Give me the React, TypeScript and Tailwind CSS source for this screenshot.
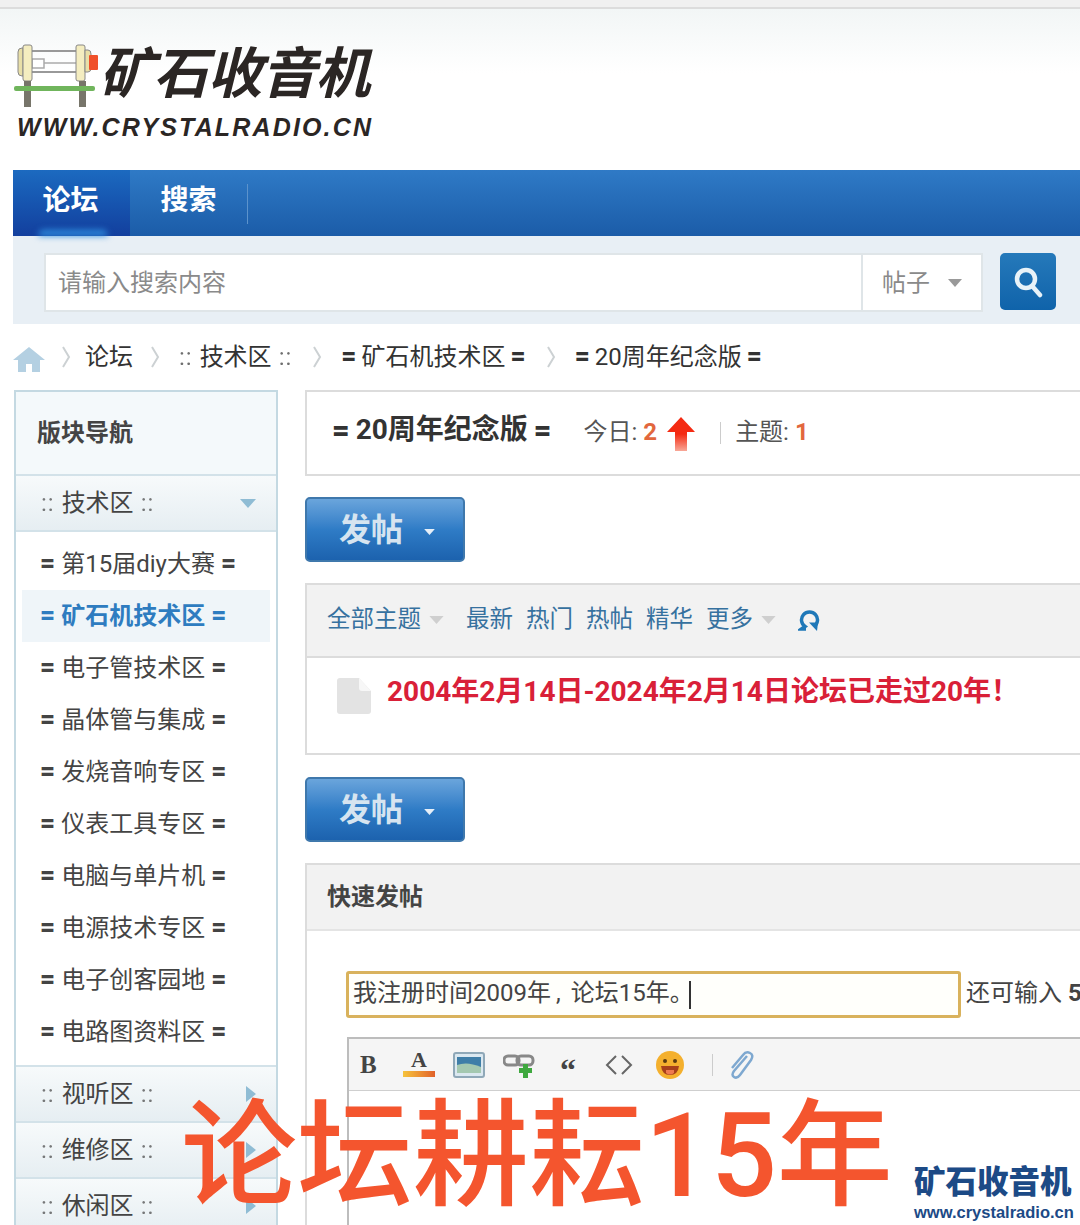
const boards = [
  '第15届diy大赛',
  '矿石机技术区',
  '电子管技术区',
  '晶体管与集成',
  '发烧音响专区',
  '仪表工具专区',
  '电脑与单片机',
  '电源技术专区',
  '电子创客园地',
  '电路图资料区',
]

function RadioLogo() {
  return (
    <svg width="84" height="66" viewBox="0 0 84 66" className="shrink-0">
      <path d="M18 7h52M18 28h52" stroke="#999" strokeWidth="2" fill="none" />
      <path d="M18 15h12v9H18zM30 19h40" stroke="#aaa" strokeWidth="1.5" fill="#fff" />
      <path d="M4 8q0-4 4-4h1v28H8q-4 0-4-4z" fill="#e8dfa8" stroke="#888" />
      <rect x="9" y="1" width="9" height="36" rx="2" fill="#f4edc0" stroke="#888" />
      <rect x="62" y="1" width="9" height="36" rx="2" fill="#f4edc0" stroke="#888" />
      <path d="M71 6h3q3 0 3 4v14q0 4-3 4h-3z" fill="#e8dfa8" stroke="#888" />
      <rect x="75" y="11" width="9" height="15" rx="1" fill="#f0502a" />
      <rect x="10" y="37" width="7" height="26" fill="#77756a" />
      <rect x="65" y="37" width="7" height="26" fill="#77756a" />
      <rect x="0" y="42" width="81" height="5" rx="2" fill="#70b55c" />
    </svg>
  )
}

function Caret({ color, size = 'w-[16px] h-[9px]' }: { color: string; size?: string }) {
  return (
    <svg viewBox="0 0 16 9" className={size}>
      <path d="M0 0h16L8 9z" fill={color} />
    </svg>
  )
}

function Chevron() {
  return (
    <svg width="10" height="22" viewBox="0 0 10 22" className="shrink-0">
      <path d="M2 1l6 10-6 10" stroke="#ccd1d3" strokeWidth="2" fill="none" />
    </svg>
  )
}

// board names are wrapped in heavy equals signs on the forum
function Eq({ children, gap = 'gap-[6px]' }: { children: React.ReactNode; gap?: string }) {
  return (
    <span className={`inline-flex items-center whitespace-nowrap ${gap}`}>
      <span className="font-black text-[1.08em] leading-none">=</span>
      <span>{children}</span>
      <span className="font-black text-[1.08em] leading-none">=</span>
    </span>
  )
}

function Dots({ children }: { children: React.ReactNode }) {
  return (
    <span className="inline-flex items-center whitespace-nowrap gap-[7px]">
      <span className="tracking-[1px] opacity-70">::</span>
      <span>{children}</span>
      <span className="tracking-[1px] opacity-70">::</span>
    </span>
  )
}

function PostButton() {
  return (
    <button className="w-[160px] h-[65px] rounded-[5px] border-2 border-[#3f78ac] bg-gradient-to-b from-[#6aa5dc] via-[#2f7cc6] to-[#1c62ae] flex items-center pl-[32px] text-[32px] font-bold text-[#d6e4f0]">
      发帖
      <Caret color="#e6eff8" size="w-[11px] h-[6px] ml-[21px] mt-1" />
    </button>
  )
}

function GroupRow({ label, open }: { label: string; open?: boolean }) {
  return (
    <div className="h-[56px] flex items-center justify-between pl-[25px] pr-[20px] border-b-2 border-[#d3e2e9] bg-gradient-to-b from-[#f7fafb] to-[#e6eef2] text-[24px] text-[#444]">
      <Dots>{label}</Dots>
      {open ? (
        <Caret color="#8fbcd4" />
      ) : (
        <svg width="10" height="16" viewBox="0 0 10 16">
          <path d="M0 0l10 8-10 8z" fill="#8fbcd4" />
        </svg>
      )}
    </div>
  )
}

function EditorIcons() {
  return (
    <div className="h-[52px] flex items-center pl-[11px] bg-[#f5f5f5] border-b border-[#cfcfcf]">
      <span className="w-[20px] text-[25px] leading-none font-black text-[#444] font-['Liberation_Serif',serif]">B</span>
      <span className="ml-[23px] w-[32px] flex flex-col items-center leading-none">
        <span className="text-[22px] font-bold text-[#444] font-['Liberation_Serif',serif] -mt-1">A</span>
        <span className="w-[32px] h-[6px] bg-gradient-to-r from-[#f5c33c] to-[#e0602a]" />
      </span>
      <svg width="32" height="26" viewBox="0 0 32 26" className="ml-[18px]">
        <rect x="1" y="1" width="30" height="24" rx="2" fill="#dbe8f0" stroke="#8fa8b8" strokeWidth="2" />
        <rect x="4" y="5" width="24" height="16" fill="#3f7ea8" />
        <path d="M4 13q10-4 24 2v6H4z" fill="#a4c8b0" />
      </svg>
      <svg width="34" height="28" viewBox="0 0 34 28" className="ml-[18px]">
        <rect x="1" y="5" width="15" height="9" rx="4" fill="none" stroke="#888" strokeWidth="3" />
        <rect x="14" y="5" width="16" height="9" rx="4" fill="none" stroke="#888" strokeWidth="3" />
        <path d="M20 13h5v4h4v5h-4v5h-5v-5h-4v-5h4z" fill="#3fa83f" />
      </svg>
      <span className="ml-[23px] w-[16px] text-[32px] leading-none font-black text-[#444] font-['Liberation_Serif',serif] mt-[10px] text-center">“</span>
      <svg width="28" height="22" viewBox="0 0 28 22" className="ml-[29px]">
        <path d="M11 2L2 11l9 9M17 2l9 9-9 9" stroke="#666" strokeWidth="2" fill="none" />
      </svg>
      <svg width="30" height="30" viewBox="0 0 30 30" className="ml-[22px]">
        <circle cx="15" cy="15" r="14" fill="#f4b02e" />
        <circle cx="10" cy="11" r="2" fill="#5a3a10" />
        <circle cx="20" cy="11" r="2" fill="#5a3a10" />
        <path d="M6 16h18q-1 9-9 9t-9-9z" fill="#a8401a" />
        <path d="M11 20h8v3q-4 3-8 0z" fill="#ee7a50" />
      </svg>
      <span className="ml-[27px] w-px h-[22px] bg-[#ccc]" />
      <svg width="28" height="30" viewBox="0 0 28 30" className="ml-[14px]">
        <path d="M20 6L7 21q-3 4 0 6t6-2L24 10q3-5-1-7t-7 2L5 18" stroke="#7ea8d0" strokeWidth="2.5" fill="none" />
      </svg>
    </div>
  )
}

export default function App() {
  return (
    <div className="relative w-[1080px] h-[1225px] overflow-hidden bg-white font-['Roboto','Noto_Sans_CJK_SC',sans-serif]">
      <div className="h-[9px] bg-[#f0f0f0] border-b-2 border-[#dcdcdc]" />

      {/* Logo */}
      <div className="h-[161px] pl-[14px] pt-[35px] bg-gradient-to-b from-[#f2f6f6] to-white to-40%">
        <div className="flex items-start">
          <RadioLogo />
          <span className="ml-[6px] mt-[-3px] text-[55px] leading-[66px] font-bold tracking-[-1px] text-[#2b2624] [transform:skewX(-14deg)] whitespace-nowrap">
            矿石收音机
          </span>
        </div>
        <div className="ml-[3px] mt-[3px] text-[25px] leading-[28px] font-black italic tracking-[2.15px] text-[#2b2624] font-['Liberation_Sans',sans-serif] whitespace-nowrap">
          WWW.CRYSTALRADIO.CN
        </div>
      </div>

      <div className="ml-[13px]">
        {/* Nav */}
        <div className="h-[66px] flex bg-gradient-to-b from-[#2f7ac6] to-[#1b5ca8] text-white text-[28px] font-bold">
          <div className="relative w-[117px] flex items-center justify-center bg-gradient-to-b from-[#1c6ac0] to-[#133f9e] pb-[4px] pr-[2px]">
            论坛
            <span className="absolute bottom-0 left-[25px] w-[70px] h-[6px] rounded-t-full bg-[#2f8fe0] blur-[3px]" />
          </div>
          <div className="w-[117px] flex items-center justify-center pb-[4px]">搜索</div>
          <div className="w-px h-[40px] mt-[14px] bg-[#5c93cc]" />
        </div>

        {/* Search */}
        <div className="h-[88px] flex items-start pt-[17px] pl-[31px] bg-[#e8eff5]">
          <div className="w-[939px] h-[59px] flex items-center bg-white border-2 border-[#dfe5e8] text-[24px] text-[#8a8a8a]">
            <div className="flex-1 pl-[12px]">请输入搜索内容</div>
            <div className="w-[120px] h-full flex items-center pl-[19px] gap-[18px] border-l-2 border-[#dfe5e8]">
              帖子
              <Caret color="#999" size="w-[14px] h-[8px]" />
            </div>
          </div>
          <div className="ml-[17px] w-[56px] h-[57px] rounded-[5px] bg-gradient-to-b from-[#2579ba] to-[#0f63aa] flex items-center justify-center">
            <svg width="30" height="32" viewBox="0 0 30 32">
              <circle cx="13" cy="13" r="9" stroke="#e8f2f8" strokeWidth="4.5" fill="none" />
              <path d="M20 21l7 8" stroke="#e8f2f8" strokeWidth="4.5" strokeLinecap="round" />
            </svg>
          </div>
        </div>

        {/* Breadcrumb */}
        <div className="h-[66px] flex items-center text-[24px] text-[#333] whitespace-nowrap">
          <svg width="32" height="26" viewBox="0 0 32 26" className="shrink-0 mt-[3px]">
            <path d="M16 1L0 14h5v12h8v-8h6v8h8V14h5z" fill="#b4d0e2" />
          </svg>
          <span className="ml-[16px]"><Chevron /></span>
          <span className="ml-[14px]">论坛</span>
          <span className="ml-[17px]"><Chevron /></span>
          <span className="ml-[19px]"><Dots>技术区</Dots></span>
          <span className="ml-[20px]"><Chevron /></span>
          <span className="ml-[19px]"><Eq gap="gap-[5px]">矿石机技术区</Eq></span>
          <span className="ml-[20px]"><Chevron /></span>
          <span className="ml-[19px]"><Eq gap="gap-[5px]">20周年纪念版</Eq></span>
        </div>

        <div className="flex items-start">
          {/* Sidebar */}
          <aside className="ml-px w-[264px] shrink-0 border-x-2 border-t-2 border-[#c4d9e2]">
            <div className="h-[84px] flex items-center pl-[21px] bg-[#f4f9fb] border-b-2 border-[#d3e2e9] text-[24px] font-bold text-[#444]">
              版块导航
            </div>
            <GroupRow label="技术区" open />
            <div className="pt-[6px] pb-[7px] px-[6px] border-b-2 border-[#d3e2e9]">
              {boards.map((b, i) => (
                <div
                  key={b}
                  className={
                    i === 1
                      ? 'h-[52px] flex items-center pl-[18px] bg-[#eff5f9] text-[24px] font-bold text-[#2e7cc0]'
                      : 'h-[52px] flex items-center pl-[18px] text-[24px] text-[#444]'
                  }
                >
                  <Eq>{b}</Eq>
                </div>
              ))}
            </div>
            <GroupRow label="视听区" />
            <GroupRow label="维修区" />
            <GroupRow label="休闲区" />
          </aside>

          {/* Main */}
          <main className="ml-[27px] w-[1000px] shrink-0">
            <div className="h-[86px] flex items-start pl-[25px] border-2 border-[#dcdcdc] whitespace-nowrap">
              <span className="mt-[18px] text-[28px] leading-[40px] font-bold text-[#333]">
                <Eq>20周年纪念版</Eq>
              </span>
              <span className="ml-[32px] mt-[22px] text-[24px] leading-[36px] text-[#555]">
                今日: <b className="text-[#e2673d]">2</b>
              </span>
              <svg width="28" height="34" viewBox="0 0 28 34" className="ml-[10px] mt-[25px]">
                <defs>
                  <linearGradient id="up" x1="0" y1="0" x2="0" y2="1">
                    <stop offset="0.5" stopColor="#f42a12" />
                    <stop offset="1" stopColor="#f8a898" />
                  </linearGradient>
                </defs>
                <path d="M14 0l14 15h-8v19H8V15H0z" fill="url(#up)" />
              </svg>
              <span className="ml-[25px] mt-[30px] w-px h-[22px] bg-[#ccc]" />
              <span className="ml-[14px] mt-[22px] text-[24px] leading-[36px] text-[#555]">
                主题: <b className="text-[#e2673d]">1</b>
              </span>
            </div>

            <div className="mt-[21px]"><PostButton /></div>

            <div className="mt-[21px] border-2 border-[#dcdcdc]">
              <div className="h-[73px] flex items-center pl-[20px] pb-[2px] bg-[#f2f2f2] border-b-2 border-[#dcdcdc] text-[23.5px] text-[#36719f] whitespace-nowrap">
                全部主题
                <Caret color="#cfcfcf" size="w-[15px] h-[8px] ml-[8px]" />
                <span className="ml-[22px]">最新</span>
                <span className="ml-[13px]">热门</span>
                <span className="ml-[13px]">热帖</span>
                <span className="ml-[13px]">精华</span>
                <span className="ml-[13px]">更多</span>
                <Caret color="#cfcfcf" size="w-[15px] h-[8px] ml-[8px]" />
                <svg width="22" height="22" viewBox="0 0 22 22" className="ml-[22px]">
                  <path d="M8 20H3.5l3.5-2.5a8 8 0 1 1 9 0" stroke="#1f78b8" strokeWidth="3.5" fill="none" />
                  <path d="M11 13.5h9L19 22z" fill="#1f78b8" />
                </svg>
              </div>
              <div className="h-[95px] flex items-start pl-[30px]">
                <svg width="34" height="36" viewBox="0 0 34 36" className="mt-[20px]">
                  <path d="M3 0h19l12 13v20q0 3-3 3H3q-3 0-3-3V3q0-3 3-3z" fill="#e3e3e3" />
                  <path d="M22 0l12 13H25q-3 0-3-3z" fill="#f7f7f7" />
                </svg>
                <span className="ml-[16px] mt-[16px] text-[28px] leading-[36px] font-bold text-[#d92038] whitespace-nowrap">
                  2004年2月14日-2024年2月14日论坛已走过20年！
                </span>
              </div>
            </div>

            <div className="mt-[22px]"><PostButton /></div>

            <div className="mt-[21px] border-2 border-[#dcdcdc] border-b-0">
              <div className="h-[66px] flex items-center pl-[20px] bg-[#f2f2f2] border-b-2 border-[#e4e4e4] text-[24px] font-bold text-[#444]">
                快速发帖
              </div>
              <div className="pl-[39px] pt-[40px]">
                <div className="flex items-center">
                  <div className="w-[615px] h-[47px] flex items-center pl-[4px] pb-[4px] rounded-[3px] border-[3px] border-[#d9b25c] bg-[#fffffb] text-[24px] text-[#444] whitespace-nowrap">
                    我注册时间2009年
                    <span className="ml-[5px] mr-[10px]">,</span>
                    论坛15年。
                    <span className="w-[2px] h-[28px] bg-[#333] ml-[-5px] mt-[4px]" />
                  </div>
                  <span className="ml-[5px] pb-[4px] text-[24px] text-[#444] whitespace-nowrap">
                    还可输入 <b>5</b>
                  </span>
                </div>
                <div className="mt-[19px] ml-px h-[300px] border-2 border-[#bdbdbd]">
                  <EditorIcons />
                </div>
              </div>
            </div>
          </main>
        </div>
      </div>

      {/* Watermark */}
      <div className="absolute left-[181px] top-[1086px] text-[116px] leading-[140px] font-medium text-[#f4552e] whitespace-nowrap">
        论坛耕耘15年
      </div>
      <div className="absolute left-[914px] top-[1164px] w-[160px] text-[#1c4a86] whitespace-nowrap">
        <div className="text-[31.5px] leading-[38px] font-black">矿石收音机</div>
        <div className="text-[16.5px] leading-[20px] font-bold font-['Liberation_Sans',sans-serif]">www.crystalradio.cn</div>
      </div>
    </div>
  )
}
